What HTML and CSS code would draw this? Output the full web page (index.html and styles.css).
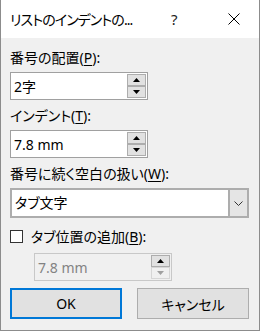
FILE: index.html
```html
<!DOCTYPE html>
<html lang="ja">
<head>
    <meta charset="UTF-8">
    <title>リストのインデントの調整</title>
    <link rel="stylesheet" href="styles.css">
</head>
<body>
    <div class="dialog">
        <div class="titlebar">
            <span class="title">リストのインデントの...</span>
            <span class="help">?</span>
            <span class="close">
                <svg width="12" height="12" viewBox="0 0 12 12"><path d="M0.5 0.5 L11.5 11.5 M11.5 0.5 L0.5 11.5" stroke="#000" stroke-width="1" fill="none"/></svg>
            </span>
        </div>

        <div class="content">
            <div class="label">番号の配置(<u>P</u>):</div>
            <div class="spin">
                <span class="spin-value">2字</span>
                <div class="spin-buttons">
                    <div class="spin-btn"><svg width="7" height="4" viewBox="0 0 7 4"><path d="M3.5 0 L7 4 L0 4 Z"/></svg></div>
                    <div class="spin-btn"><svg width="7" height="4" viewBox="0 0 7 4"><path d="M0 0 L7 0 L3.5 4 Z"/></svg></div>
                </div>
            </div>

            <div class="label spaced">インデント(<u>T</u>):</div>
            <div class="spin">
                <span class="spin-value">7.8 mm</span>
                <div class="spin-buttons">
                    <div class="spin-btn"><svg width="7" height="4" viewBox="0 0 7 4"><path d="M3.5 0 L7 4 L0 4 Z"/></svg></div>
                    <div class="spin-btn"><svg width="7" height="4" viewBox="0 0 7 4"><path d="M0 0 L7 0 L3.5 4 Z"/></svg></div>
                </div>
            </div>

            <div class="label spaced">番号に続く空白の扱い(<u>W</u>):</div>
            <div class="combo">
                <span class="combo-value">タブ文字</span>
                <div class="combo-btn">
                    <svg width="9" height="5" viewBox="0 0 9 5"><path d="M0.5 0.5 L4.5 4.5 L8.5 0.5" stroke="#333" stroke-width="1" fill="none"/></svg>
                </div>
            </div>

            <div class="check-row">
                <span class="checkbox"></span>
                <span>タブ位置の追加(<u>B</u>):</span>
            </div>
            <div class="spin disabled">
                <span class="spin-value">7.8 mm</span>
                <div class="spin-buttons">
                    <div class="spin-btn"><svg width="7" height="4" viewBox="0 0 7 4"><path d="M3.5 0 L7 4 L0 4 Z"/></svg></div>
                    <div class="spin-btn off"><svg width="7" height="4" viewBox="0 0 7 4"><path d="M0 0 L7 0 L3.5 4 Z"/></svg></div>
                </div>
            </div>

            <div class="actions">
                <button class="btn primary">OK</button>
                <button class="btn">キャンセル</button>
            </div>
        </div>
    </div>
</body>
</html>
```

FILE: styles.css
```css
* {
    margin: 0;
    padding: 0;
    box-sizing: border-box;
}

body {
    font-family: "Noto Sans", "Noto Sans CJK JP", sans-serif;
    font-size: 14px;
    color: #000;
    background: #f0f0f0;
}

.dialog {
    width: 260px;
    height: 331px;
    background: #f0f0f0;
    border-left: 1px solid #8c8c8c;
    border-right: 1px solid #8c8c8c;
    border-bottom: 1px solid #8c8c8c;
}

/* Title bar */
.titlebar {
    height: 38px;
    background: #fff;
    display: flex;
    align-items: center;
    padding-left: 9px;
}

.title {
    width: 161px;
    letter-spacing: -0.9px;
    font-feature-settings: "palt";
}

.help {
    width: 57px;
    font-size: 15px;
    color: #222;
}

.close {
    display: flex;
    align-items: center;
}

/* Body */
.content {
    padding: 10px 10px 0 9px;
}

.label {
    height: 20px;
    line-height: 20px;
    margin-bottom: 4px;
    font-feature-settings: "palt";
}

.label.spaced {
    margin-top: 6px;
}

u {
    text-decoration-thickness: 1px;
    text-underline-offset: 2px;
}

.spin {
    width: 138px;
    height: 28px;
    display: flex;
    align-items: center;
    background: #fff;
    border: 1px solid #a0a0a0;
}

.spin-value {
    flex: 1;
    padding-left: 3px;
}

.spin-buttons {
    width: 19px;
    height: 100%;
    padding: 1px 0;
    margin-right: 1px;
    display: flex;
    flex-direction: column;
}

.spin-btn {
    flex: 1;
    display: flex;
    align-items: center;
    justify-content: center;
    background: #e1e1e1;
    border: 1px solid #adadad;
}

.spin-btn svg {
    fill: #000;
}

.spin.disabled {
    margin: 7px 0 0 24px;
    background: #f0f0f0;
    border-color: #c8c8c8;
    color: #838383;
}

.spin-btn.off {
    background: #f0f0f0;
    border-color: #d6d6d6;
}

.spin-btn.off svg {
    fill: #a0a0a0;
}

/* Combo box */
.combo {
    width: 239px;
    height: 30px;
    display: flex;
    background: #fff;
    border: 2px solid #adadad;
}

.combo-value {
    flex: 1;
    line-height: 26px;
    padding-left: 3px;
    font-feature-settings: "palt";
}

.combo-btn {
    width: 19px;
    display: flex;
    align-items: center;
    justify-content: center;
    background: #e5e5e5;
    border-left: 2px solid #adadad;
}

/* Checkbox */
.check-row {
    height: 20px;
    margin-top: 8px;
    display: flex;
    align-items: center;
    gap: 8px;
    font-feature-settings: "palt";
}

.checkbox {
    width: 13px;
    height: 13px;
    background: #fff;
    border: 1px solid #333;
}

/* Buttons */
.actions {
    display: flex;
    gap: 15px;
    margin-top: 7px;
}

.btn {
    width: 112px;
    height: 31px;
    font-family: inherit;
    font-size: 14px;
    color: #000;
    background: #e1e1e1;
    border: 1px solid #adadad;
    font-feature-settings: "palt";
}

.btn.primary {
    border: 2px solid #0078d7;
}
```
